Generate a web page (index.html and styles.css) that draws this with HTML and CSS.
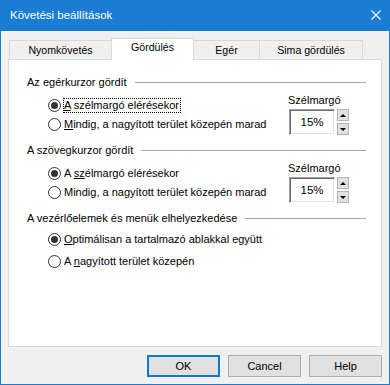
FILE: index.html
```html
<!DOCTYPE html>
<html lang="hu">
<head>
    <meta charset="UTF-8">
    <title>Követési beállítások</title>
    <link rel="stylesheet" href="styles.css">
</head>
<body>
    <div class="window">
        <div class="titlebar">
            <span class="title">Követési beállítások</span>
            <svg class="close" width="10" height="10" viewBox="0 0 10 10">
                <path d="M0.5 0.5 L9.5 9.5 M9.5 0.5 L0.5 9.5" stroke="#fff" stroke-width="1.1" fill="none"/>
            </svg>
        </div>

        <div class="client">
            <div class="tabs">
                <div class="tab tab-1">Nyomkövetés</div>
                <div class="tab tab-2 active">Gördülés</div>
                <div class="tab tab-3">Egér</div>
                <div class="tab tab-4">Sima gördülés</div>
            </div>

            <div class="panel">
                <!-- egérkurzor -->
                <div class="group">
                    <div class="group-head"><span>Az egérkurzor gördít</span></div>
                    <div class="group-body">
                        <div class="radios">
                            <div class="radio checked"><span class="circle"></span><span class="text focus"><u>A</u> szélmargó elérésekor</span></div>
                            <div class="radio"><span class="circle"></span><span class="text"><u>M</u>indig, a nagyított terület közepén marad</span></div>
                        </div>
                        <div class="spin">
                            <div class="spin-label">Szélmargó</div>
                            <div class="spin-row">
                                <div class="spin-box">15%</div>
                                <div class="spin-btns">
                                    <div class="spin-btn up"></div>
                                    <div class="spin-btn down"></div>
                                </div>
                            </div>
                        </div>
                    </div>
                </div>

                <!-- szövegkurzor -->
                <div class="group">
                    <div class="group-head"><span>A szövegkurzor gördít</span></div>
                    <div class="group-body">
                        <div class="radios">
                            <div class="radio checked"><span class="circle"></span><span class="text">A <u>sz</u>élmargó elérésekor</span></div>
                            <div class="radio"><span class="circle"></span><span class="text">Mindi<u>g</u>, a nagyított terület közepén marad</span></div>
                        </div>
                        <div class="spin">
                            <div class="spin-label">Szélmargó</div>
                            <div class="spin-row">
                                <div class="spin-box">15%</div>
                                <div class="spin-btns">
                                    <div class="spin-btn up"></div>
                                    <div class="spin-btn down"></div>
                                </div>
                            </div>
                        </div>
                    </div>
                </div>

                <!-- vezérlőelemek -->
                <div class="group">
                    <div class="group-head"><span>A vezérlőelemek és menük elhelyezkedése</span></div>
                    <div class="radios spaced">
                        <div class="radio checked"><span class="circle"></span><span class="text"><u>O</u>ptimálisan a tartalmazó ablakkal együtt</span></div>
                        <div class="radio"><span class="circle"></span><span class="text">A <u>n</u>agyított terület közepén</span></div>
                    </div>
                </div>
            </div>

            <div class="buttons">
                <button class="btn default">OK</button>
                <button class="btn">Cancel</button>
                <button class="btn">Help</button>
            </div>
        </div>
    </div>
</body>
</html>
```

FILE: styles.css
```css
* {
    box-sizing: border-box;
}

body {
    margin: 0;
    font-family: "Liberation Sans", Arial, sans-serif;
    font-size: 11px;
    color: #000;
    background: #fff;
}

.window {
    width: 390px;
    height: 385px;
    border: 1px solid #1a7dd3;
    border-top: none;
    background: #f0f0f0;
    display: flex;
    flex-direction: column;
}

.titlebar {
    height: 31px;
    background: #1a7dd3;
    color: #fff;
    display: flex;
    align-items: center;
    justify-content: space-between;
    padding: 0 8px 1px 9px;
}

.title {
    font-size: 11.5px;
}

.client {
    flex: 1;
    padding: 7px 7px 0 7px;
}

/* tabs */
.tabs {
    display: flex;
    align-items: flex-end;
    height: 21px;
    padding-left: 1px;
    position: relative;
    z-index: 1;
}

.tab {
    height: 19px;
    border: 1px solid #d9d9d9;
    border-bottom: none;
    margin-right: -1px;
    background: #f0f0f0;
    text-align: center;
    line-height: 18px;
    font-size: 10.6px;
}

.tab-1 { width: 103px; }
.tab-2 { width: 83px; }
.tab-3 { width: 67px; }
.tab-4 { width: 104px; }

.tab.active {
    height: 22px;
    margin-bottom: -1px;
    background: #fff;
    line-height: 17px;
    position: relative;
    z-index: 2;
}

.panel {
    height: 288px;
    background: #fff;
    border: 1px solid #d9d9d9;
    padding: 14px 15px 0 18px;
}

/* group boxes */
.group {
    margin-bottom: 7px;
}

.group-head {
    display: flex;
    align-items: center;
    height: 16px;
}

.group-head::after {
    content: "";
    flex: 1;
    border-top: 1px solid #a8a8a8;
    margin-left: 8px;
}

.group-body {
    display: flex;
    align-items: center;
    margin-top: 4px;
}

.radios {
    width: 261px;
    padding-left: 21px;
}

.group > .radios {
    margin-top: 4px;
}

.radios.spaced .radio + .radio {
    margin-top: 3px;
}

.radio {
    display: flex;
    align-items: center;
    height: 19px;
    white-space: nowrap;
}

.circle {
    width: 13px;
    height: 13px;
    border: 1px solid #333;
    border-radius: 50%;
    background: #fff;
    margin-right: 2px;
    display: flex;
    align-items: center;
    justify-content: center;
}

.radio.checked .circle::after {
    content: "";
    width: 7px;
    height: 7px;
    border-radius: 50%;
    background: #333;
}

.text {
    border: 1px dotted transparent;
    padding: 0 1px 0 0;
    line-height: 13px;
}

.text.focus {
    border-color: #000;
}

/* spinner */
.spin {
    display: flex;
    flex-direction: column;
}

.spin-label {
    line-height: 13px;
    margin-bottom: 2px;
}

.spin-row {
    display: flex;
    align-items: stretch;
    gap: 2px;
}

.spin-box {
    width: 46px;
    height: 26px;
    margin-left: 1px;
    background: #fff;
    border: 1px solid;
    border-color: #a0a0a0 #fff #fff #a0a0a0;
    box-shadow: inset 1px 1px #696969, inset -1px -1px #e3e3e3;
    display: flex;
    align-items: center;
    justify-content: center;
    font-size: 11.5px;
}

.spin-btns {
    display: flex;
    flex-direction: column;
    justify-content: space-between;
}

.spin-btn {
    width: 12px;
    height: 12px;
    background: #e1e1e1;
    border: 1px solid #b4b4b4;
    display: flex;
    align-items: center;
    justify-content: center;
}

.spin-btn::after {
    content: "";
    border-left: 3px solid transparent;
    border-right: 3px solid transparent;
}

.spin-btn.up::after {
    border-bottom: 3px solid #000;
}

.spin-btn.down::after {
    border-top: 3px solid #000;
}

/* dialog buttons */
.buttons {
    display: flex;
    justify-content: flex-end;
    gap: 8px;
    margin-top: 8px;
}

.btn {
    width: 73px;
    height: 22px;
    background: #e1e1e1;
    border: 1px solid #adadad;
    font-family: inherit;
    font-size: 11px;
    color: #000;
    padding: 0;
}

.btn.default {
    border: 2px solid #0f78d2;
}
```
